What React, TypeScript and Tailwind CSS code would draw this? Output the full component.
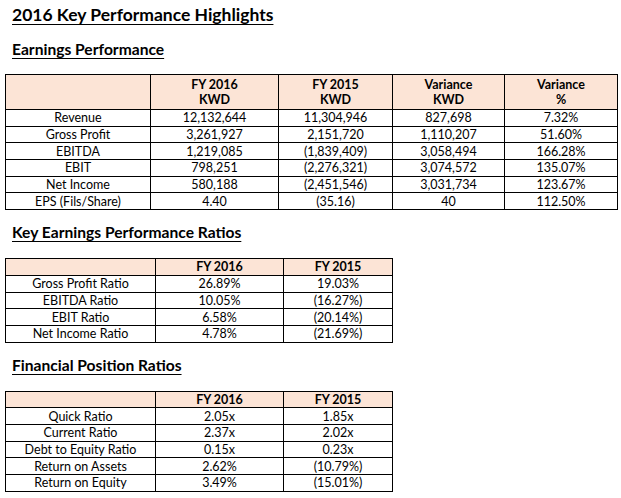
import React from 'react'

type Row = string[]

const earnings: Row[] = [
	['Revenue', '12,132,644', '11,304,946', '827,698', '7.32%'],
	['Gross Profit', '3,261,927', '2,151,720', '1,110,207', '51.60%'],
	['EBITDA', '1,219,085', '(1,839,409)', '3,058,494', '166.28%'],
	['EBIT', '798,251', '(2,276,321)', '3,074,572', '135.07%'],
	['Net Income', '580,188', '(2,451,546)', '3,031,734', '123.67%'],
	['EPS (Fils/Share)', '4.40', '(35.16)', '40', '112.50%'],
]

const ratios: Row[] = [
	['Gross Profit Ratio', '26.89%', '19.03%'],
	['EBITDA Ratio', '10.05%', '(16.27%)'],
	['EBIT Ratio', '6.58%', '(20.14%)'],
	['Net Income Ratio', '4.78%', '(21.69%)'],
]

const position: Row[] = [
	['Quick Ratio', '2.05x', '1.85x'],
	['Current Ratio', '2.37x', '2.02x'],
	['Debt to Equity Ratio', '0.15x', '0.23x'],
	['Return on Assets', '2.62%', '(10.79%)'],
	['Return on Equity', '3.49%', '(15.01%)'],
]

function Heading({ children }: { children: React.ReactNode }) {
	return (
		<h2 className="pl-[12px] text-[15.6px] font-bold leading-[18px] underline underline-offset-[3px]">
			{children}
		</h2>
	)
}

function Body({ rows }: { rows: Row[] }) {
	return (
		<tbody>
			{rows.map((r) => (
				<tr key={r[0]}>
					{r.map((c, i) => (
						<td
							key={i}
							className="h-[16.7px] border border-black p-0 pt-[1px] text-center align-middle leading-[14px]"
						>
							{c}
						</td>
					))}
				</tr>
			))}
		</tbody>
	)
}

function SmallHead() {
	return (
		<thead>
			<tr className="bg-[#fce4d6]">
				<th className="h-[16.7px] border border-black" />
				<th className="h-[16.7px] border border-black p-0 pt-[1px] leading-[14px] font-bold">FY 2016</th>
				<th className="h-[16.7px] border border-black p-0 pt-[1px] leading-[14px] font-bold">FY 2015</th>
			</tr>
		</thead>
	)
}

export default function App() {
	return (
		<div className="h-[498px] w-[621px] bg-white font-['Lato',sans-serif] text-[12.5px] text-black">
			<h1 className="pt-[5px] pl-[12px] text-[17.5px] font-bold leading-[20px] underline underline-offset-[3px]">
				2016 Key Performance Highlights
			</h1>

			<div className="mt-[15px]">
				<Heading>Earnings Performance</Heading>
			</div>

			<table className="mt-[16px] ml-[5px] table-fixed border-collapse">
				<colgroup>
					<col className="w-[145px]" />
					<col className="w-[128px]" />
					<col className="w-[114px]" />
					<col className="w-[112px]" />
					<col className="w-[113px]" />
				</colgroup>
				<thead>
					<tr className="bg-[#fce4d6] font-bold">
						<th className="h-[35px] border border-black" />
						{[
							['FY 2016', 'KWD'],
							['FY 2015', 'KWD'],
							['Variance', 'KWD'],
							['Variance', '%'],
						].map(([a, b], i) => (
							<th
								key={i}
								className="h-[35px] border border-black p-0 text-center leading-[15px] font-bold"
							>
								{a}
								<br />
								{b}
							</th>
						))}
					</tr>
				</thead>
				<Body rows={earnings} />
			</table>

			<div className="mt-[13px]">
				<Heading>Key Earnings Performance Ratios</Heading>
			</div>

			<table className="mt-[17px] ml-[5px] table-fixed border-collapse">
				<colgroup>
					<col className="w-[150px]" />
					<col className="w-[128px]" />
					<col className="w-[109px]" />
				</colgroup>
				<SmallHead />
				<Body rows={ratios} />
			</table>

			<div className="mt-[13px]">
				<Heading>Financial Position Ratios</Heading>
			</div>

			<table className="mt-[17px] ml-[5px] table-fixed border-collapse">
				<colgroup>
					<col className="w-[150px]" />
					<col className="w-[128px]" />
					<col className="w-[109px]" />
				</colgroup>
				<SmallHead />
				<Body rows={position} />
			</table>
		</div>
	)
}
